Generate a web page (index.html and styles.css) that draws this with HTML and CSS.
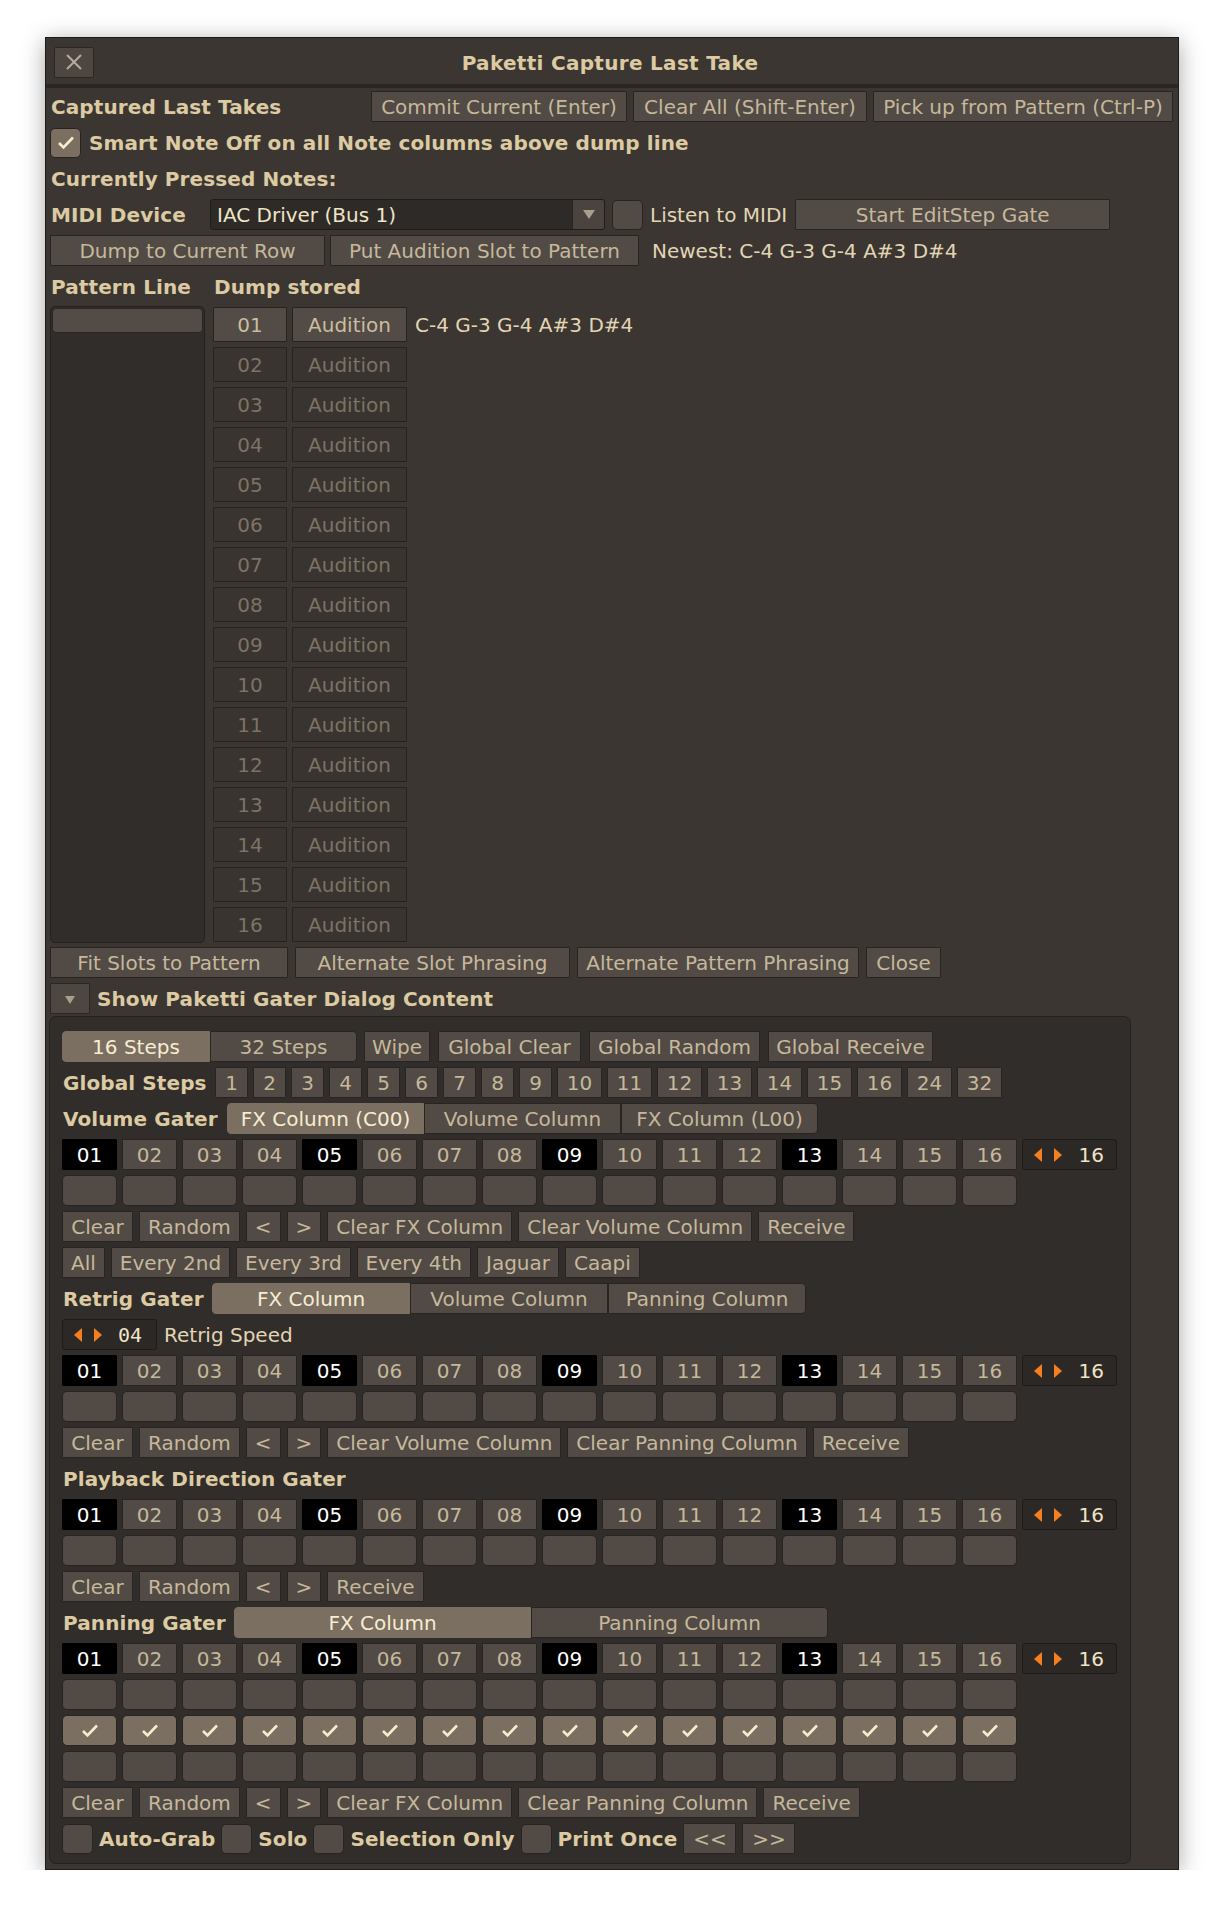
FILE: index.html
```html
<!DOCTYPE html>
<html>
<head>
<meta charset="utf-8">
<title>Paketti Capture Last Take</title>
<link rel="stylesheet" href="styles.css">
</head>
<body>
<div class="win">
  <div class="titlebar">
    <div class="closebtn"><svg width="18" height="18" viewBox="0 0 18 18"><path d="M2 2L16 16M16 2L2 16" stroke="#b6ab97" stroke-width="2" fill="none"/></svg></div>
    <div class="title">Paketti Capture Last Take</div>
    <div></div>
  </div>
  <div class="content">
    <div class="row">
      <span class="lbl">Captured Last Takes</span>
      <span class="btn first-right w-commit">Commit Current (Enter)</span>
      <span class="btn w-clearall">Clear All (Shift-Enter)</span>
      <span class="btn w-pick">Pick up from Pattern (Ctrl-P)</span>
    </div>
    <div class="row g7">
      <span class="cb on"><svg width="18" height="15" viewBox="0 0 18 15"><path d="M2 8L6.5 12.5L16 2.5" fill="none" stroke="#f6edcb" stroke-width="2.6"/></svg></span>
      <span class="lbl">Smart Note Off on all Note columns above dump line</span>
    </div>
    <div class="row"><span class="lbl">Currently Pressed Notes:</span></div>
    <div class="row g7">
      <span class="lbl w-midi">MIDI Device</span>
      <div class="popup"><span class="popup-text">IAC Driver (Bus 1)</span><span class="popup-arrow"><svg width="12" height="9" viewBox="0 0 12 9"><path d="M0 0H12L6 9Z" fill="#a99e8b"/></svg></span></div>
      <span class="cb"></span>
      <span class="txt">Listen to MIDI</span>
      <span class="btn w-gate">Start EditStep Gate</span>
    </div>
    <div class="row g5">
      <span class="btn w-dump">Dump to Current Row</span>
      <span class="btn w-put">Put Audition Slot to Pattern</span>
      <span class="txt newest">Newest: C-4 G-3 G-4 A#3 D#4</span>
    </div>
    <div class="row">
      <span class="lbl w-pline">Pattern Line</span>
      <span class="lbl">Dump stored</span>
    </div>
    <div class="slots-area">
      <div class="plist"><div class="plist-item"></div></div>
      <div class="slots">
        <div class="slot-row"><span class="sbtn num on">01</span><span class="sbtn aud on">Audition</span><span class="txt">C-4 G-3 G-4 A#3 D#4</span></div>
        <div class="slot-row"><span class="sbtn num">02</span><span class="sbtn aud">Audition</span></div>
        <div class="slot-row"><span class="sbtn num">03</span><span class="sbtn aud">Audition</span></div>
        <div class="slot-row"><span class="sbtn num">04</span><span class="sbtn aud">Audition</span></div>
        <div class="slot-row"><span class="sbtn num">05</span><span class="sbtn aud">Audition</span></div>
        <div class="slot-row"><span class="sbtn num">06</span><span class="sbtn aud">Audition</span></div>
        <div class="slot-row"><span class="sbtn num">07</span><span class="sbtn aud">Audition</span></div>
        <div class="slot-row"><span class="sbtn num">08</span><span class="sbtn aud">Audition</span></div>
        <div class="slot-row"><span class="sbtn num">09</span><span class="sbtn aud">Audition</span></div>
        <div class="slot-row"><span class="sbtn num">10</span><span class="sbtn aud">Audition</span></div>
        <div class="slot-row"><span class="sbtn num">11</span><span class="sbtn aud">Audition</span></div>
        <div class="slot-row"><span class="sbtn num">12</span><span class="sbtn aud">Audition</span></div>
        <div class="slot-row"><span class="sbtn num">13</span><span class="sbtn aud">Audition</span></div>
        <div class="slot-row"><span class="sbtn num">14</span><span class="sbtn aud">Audition</span></div>
        <div class="slot-row"><span class="sbtn num">15</span><span class="sbtn aud">Audition</span></div>
        <div class="slot-row"><span class="sbtn num">16</span><span class="sbtn aud">Audition</span></div>
      </div>
    </div>
    <div class="row g7 bottom-row">
      <span class="btn w-fit">Fit Slots to Pattern</span>
      <span class="btn w-alts">Alternate Slot Phrasing</span>
      <span class="btn w-altp">Alternate Pattern Phrasing</span>
      <span class="btn w-close">Close</span>
    </div>
    <div class="row g6">
      <span class="disclosure"><svg width="10" height="8" viewBox="0 0 10 8"><path d="M0 0H10L5 8Z" fill="#a99e8b"/></svg></span>
      <span class="lbl">Show Paketti Gater Dialog Content</span>
    </div>

    <div class="panel">
      <div class="row g8">
        <div class="seg seg-steps"><span class="segb sel w148">16 Steps</span><span class="segb w147">32 Steps</span></div>
        <span class="btn w-wipe">Wipe</span>
        <span class="btn w-gclear">Global Clear</span>
        <span class="btn w-grandom">Global Random</span>
        <span class="btn w-greceive">Global Receive</span>
      </div>
      <div class="row g5">
        <span class="lbl w-gs">Global Steps</span>
        <span class="btn gs1">1</span><span class="btn gs1">2</span><span class="btn gs1">3</span><span class="btn gs1">4</span><span class="btn gs1">5</span><span class="btn gs1">6</span><span class="btn gs1">7</span><span class="btn gs1">8</span><span class="btn gs1">9</span>
        <span class="btn gs2">10</span><span class="btn gs2">11</span><span class="btn gs2">12</span><span class="btn gs2">13</span><span class="btn gs2">14</span><span class="btn gs2">15</span><span class="btn gs2">16</span><span class="btn gs2">24</span><span class="btn gs2">32</span>
      </div>
      <div class="row">
        <span class="lbl w-vg">Volume Gater</span>
        <div class="seg"><span class="segb sel w197">FX Column (C00)</span><span class="segb w197">Volume Column</span><span class="segb w197">FX Column (L00)</span></div>
      </div>
      <div class="row g5">
        <span class="step hl">01</span><span class="step">02</span><span class="step">03</span><span class="step">04</span><span class="step hl">05</span><span class="step">06</span><span class="step">07</span><span class="step">08</span><span class="step hl">09</span><span class="step">10</span><span class="step">11</span><span class="step">12</span><span class="step hl">13</span><span class="step">14</span><span class="step">15</span><span class="step">16</span>
        <span class="vbox"><svg class="arr" width="8" height="14" viewBox="0 0 8 14"><path d="M8 0L0 7L8 14Z"/></svg><svg class="arr" width="8" height="14" viewBox="0 0 8 14"><path d="M0 0L8 7L0 14Z"/></svg><span class="vnum">16</span></span>
      </div>
      <div class="row g5">
        <span class="cell"></span><span class="cell"></span><span class="cell"></span><span class="cell"></span><span class="cell"></span><span class="cell"></span><span class="cell"></span><span class="cell"></span><span class="cell"></span><span class="cell"></span><span class="cell"></span><span class="cell"></span><span class="cell"></span><span class="cell"></span><span class="cell"></span><span class="cell"></span>
      </div>
      <div class="row">
        <span class="btn w-clr">Clear</span><span class="btn">Random</span><span class="btn">&lt;</span><span class="btn">&gt;</span><span class="btn">Clear FX Column</span><span class="btn">Clear Volume Column</span><span class="btn">Receive</span>
      </div>
      <div class="row">
        <span class="btn">All</span><span class="btn">Every 2nd</span><span class="btn">Every 3rd</span><span class="btn">Every 4th</span><span class="btn">Jaguar</span><span class="btn">Caapi</span>
      </div>
      <div class="row">
        <span class="lbl w-rg">Retrig Gater</span>
        <div class="seg"><span class="segb sel w198">FX Column</span><span class="segb w198">Volume Column</span><span class="segb w198">Panning Column</span></div>
      </div>
      <div class="row g7">
        <span class="vbox"><svg class="arr" width="8" height="14" viewBox="0 0 8 14"><path d="M8 0L0 7L8 14Z"/></svg><svg class="arr" width="8" height="14" viewBox="0 0 8 14"><path d="M0 0L8 7L0 14Z"/></svg><span class="vnum mono">04</span></span>
        <span class="txt">Retrig Speed</span>
      </div>
      <div class="row g5">
        <span class="step hl">01</span><span class="step">02</span><span class="step">03</span><span class="step">04</span><span class="step hl">05</span><span class="step">06</span><span class="step">07</span><span class="step">08</span><span class="step hl">09</span><span class="step">10</span><span class="step">11</span><span class="step">12</span><span class="step hl">13</span><span class="step">14</span><span class="step">15</span><span class="step">16</span>
        <span class="vbox"><svg class="arr" width="8" height="14" viewBox="0 0 8 14"><path d="M8 0L0 7L8 14Z"/></svg><svg class="arr" width="8" height="14" viewBox="0 0 8 14"><path d="M0 0L8 7L0 14Z"/></svg><span class="vnum">16</span></span>
      </div>
      <div class="row g5">
        <span class="cell"></span><span class="cell"></span><span class="cell"></span><span class="cell"></span><span class="cell"></span><span class="cell"></span><span class="cell"></span><span class="cell"></span><span class="cell"></span><span class="cell"></span><span class="cell"></span><span class="cell"></span><span class="cell"></span><span class="cell"></span><span class="cell"></span><span class="cell"></span>
      </div>
      <div class="row">
        <span class="btn w-clr">Clear</span><span class="btn">Random</span><span class="btn">&lt;</span><span class="btn">&gt;</span><span class="btn">Clear Volume Column</span><span class="btn">Clear Panning Column</span><span class="btn">Receive</span>
      </div>
      <div class="row">
        <span class="lbl">Playback Direction Gater</span>
      </div>
      <div class="row g5">
        <span class="step hl">01</span><span class="step">02</span><span class="step">03</span><span class="step">04</span><span class="step hl">05</span><span class="step">06</span><span class="step">07</span><span class="step">08</span><span class="step hl">09</span><span class="step">10</span><span class="step">11</span><span class="step">12</span><span class="step hl">13</span><span class="step">14</span><span class="step">15</span><span class="step">16</span>
        <span class="vbox"><svg class="arr" width="8" height="14" viewBox="0 0 8 14"><path d="M8 0L0 7L8 14Z"/></svg><svg class="arr" width="8" height="14" viewBox="0 0 8 14"><path d="M0 0L8 7L0 14Z"/></svg><span class="vnum">16</span></span>
      </div>
      <div class="row g5">
        <span class="cell"></span><span class="cell"></span><span class="cell"></span><span class="cell"></span><span class="cell"></span><span class="cell"></span><span class="cell"></span><span class="cell"></span><span class="cell"></span><span class="cell"></span><span class="cell"></span><span class="cell"></span><span class="cell"></span><span class="cell"></span><span class="cell"></span><span class="cell"></span>
      </div>
      <div class="row">
        <span class="btn w-clr">Clear</span><span class="btn">Random</span><span class="btn">&lt;</span><span class="btn">&gt;</span><span class="btn">Receive</span>
      </div>
      <div class="row">
        <span class="lbl w-pg">Panning Gater</span>
        <div class="seg"><span class="segb sel w297">FX Column</span><span class="segb w297">Panning Column</span></div>
      </div>
      <div class="row g5">
        <span class="step hl">01</span><span class="step">02</span><span class="step">03</span><span class="step">04</span><span class="step hl">05</span><span class="step">06</span><span class="step">07</span><span class="step">08</span><span class="step hl">09</span><span class="step">10</span><span class="step">11</span><span class="step">12</span><span class="step hl">13</span><span class="step">14</span><span class="step">15</span><span class="step">16</span>
        <span class="vbox"><svg class="arr" width="8" height="14" viewBox="0 0 8 14"><path d="M8 0L0 7L8 14Z"/></svg><svg class="arr" width="8" height="14" viewBox="0 0 8 14"><path d="M0 0L8 7L0 14Z"/></svg><span class="vnum">16</span></span>
      </div>
      <div class="row g5">
        <span class="cell"></span><span class="cell"></span><span class="cell"></span><span class="cell"></span><span class="cell"></span><span class="cell"></span><span class="cell"></span><span class="cell"></span><span class="cell"></span><span class="cell"></span><span class="cell"></span><span class="cell"></span><span class="cell"></span><span class="cell"></span><span class="cell"></span><span class="cell"></span>
      </div>
      <div class="row g5">
        <span class="cell on"><svg width="18" height="15" viewBox="0 0 18 15"><path d="M2 8L6.5 12.5L16 2.5" fill="none" stroke="#f6edcb" stroke-width="2.6"/></svg></span>
        <span class="cell on"><svg width="18" height="15" viewBox="0 0 18 15"><path d="M2 8L6.5 12.5L16 2.5" fill="none" stroke="#f6edcb" stroke-width="2.6"/></svg></span>
        <span class="cell on"><svg width="18" height="15" viewBox="0 0 18 15"><path d="M2 8L6.5 12.5L16 2.5" fill="none" stroke="#f6edcb" stroke-width="2.6"/></svg></span>
        <span class="cell on"><svg width="18" height="15" viewBox="0 0 18 15"><path d="M2 8L6.5 12.5L16 2.5" fill="none" stroke="#f6edcb" stroke-width="2.6"/></svg></span>
        <span class="cell on"><svg width="18" height="15" viewBox="0 0 18 15"><path d="M2 8L6.5 12.5L16 2.5" fill="none" stroke="#f6edcb" stroke-width="2.6"/></svg></span>
        <span class="cell on"><svg width="18" height="15" viewBox="0 0 18 15"><path d="M2 8L6.5 12.5L16 2.5" fill="none" stroke="#f6edcb" stroke-width="2.6"/></svg></span>
        <span class="cell on"><svg width="18" height="15" viewBox="0 0 18 15"><path d="M2 8L6.5 12.5L16 2.5" fill="none" stroke="#f6edcb" stroke-width="2.6"/></svg></span>
        <span class="cell on"><svg width="18" height="15" viewBox="0 0 18 15"><path d="M2 8L6.5 12.5L16 2.5" fill="none" stroke="#f6edcb" stroke-width="2.6"/></svg></span>
        <span class="cell on"><svg width="18" height="15" viewBox="0 0 18 15"><path d="M2 8L6.5 12.5L16 2.5" fill="none" stroke="#f6edcb" stroke-width="2.6"/></svg></span>
        <span class="cell on"><svg width="18" height="15" viewBox="0 0 18 15"><path d="M2 8L6.5 12.5L16 2.5" fill="none" stroke="#f6edcb" stroke-width="2.6"/></svg></span>
        <span class="cell on"><svg width="18" height="15" viewBox="0 0 18 15"><path d="M2 8L6.5 12.5L16 2.5" fill="none" stroke="#f6edcb" stroke-width="2.6"/></svg></span>
        <span class="cell on"><svg width="18" height="15" viewBox="0 0 18 15"><path d="M2 8L6.5 12.5L16 2.5" fill="none" stroke="#f6edcb" stroke-width="2.6"/></svg></span>
        <span class="cell on"><svg width="18" height="15" viewBox="0 0 18 15"><path d="M2 8L6.5 12.5L16 2.5" fill="none" stroke="#f6edcb" stroke-width="2.6"/></svg></span>
        <span class="cell on"><svg width="18" height="15" viewBox="0 0 18 15"><path d="M2 8L6.5 12.5L16 2.5" fill="none" stroke="#f6edcb" stroke-width="2.6"/></svg></span>
        <span class="cell on"><svg width="18" height="15" viewBox="0 0 18 15"><path d="M2 8L6.5 12.5L16 2.5" fill="none" stroke="#f6edcb" stroke-width="2.6"/></svg></span>
        <span class="cell on"><svg width="18" height="15" viewBox="0 0 18 15"><path d="M2 8L6.5 12.5L16 2.5" fill="none" stroke="#f6edcb" stroke-width="2.6"/></svg></span>
      </div>
      <div class="row g5">
        <span class="cell"></span><span class="cell"></span><span class="cell"></span><span class="cell"></span><span class="cell"></span><span class="cell"></span><span class="cell"></span><span class="cell"></span><span class="cell"></span><span class="cell"></span><span class="cell"></span><span class="cell"></span><span class="cell"></span><span class="cell"></span><span class="cell"></span><span class="cell"></span>
      </div>
      <div class="row">
        <span class="btn w-clr">Clear</span><span class="btn">Random</span><span class="btn">&lt;</span><span class="btn">&gt;</span><span class="btn">Clear FX Column</span><span class="btn">Clear Panning Column</span><span class="btn">Receive</span>
      </div>
      <div class="row g6 last-row">
        <span class="cb"></span><span class="lbl">Auto-Grab</span>
        <span class="cb"></span><span class="lbl">Solo</span>
        <span class="cb"></span><span class="lbl">Selection Only</span>
        <span class="cb"></span><span class="lbl">Print Once</span>
        <span class="btn w-nav">&lt;&lt;</span><span class="btn w-nav">&gt;&gt;</span>
      </div>
    </div>
  </div>
</div>
</body>
</html>
```
FILE: styles.css
```css
* { box-sizing: border-box; }

body {
  margin: 0;
  background: #ffffff;
  font-family: "DejaVu Sans", "Liberation Sans", sans-serif;
  font-size: 20px;
  color: #dccaa2;
}

.win {
  margin: 37px 0 0 45px;
  width: 1134px;
  height: 1833px;
  background: #3b3632;
  border: 1px solid #1d1a18;
  box-shadow: 0 4px 22px rgba(0, 0, 0, 0.35);
}

.titlebar {
  height: 50px;
  display: grid;
  grid-template-columns: 56px 1fr 68px;
  align-items: center;
  padding-left: 8px;
  border-bottom: 4px solid #2a2623;
}

.closebtn {
  width: 40px;
  height: 31px;
  margin-top: 2px;
  background: #4d4641;
  border: 1px solid #2a2623;
  border-radius: 2px;
  display: flex;
  align-items: center;
  justify-content: center;
}

.title {
  text-align: center;
  font-weight: bold;
  color: #dccaa2;
  letter-spacing: 0.3px;
  padding-top: 3px;
}

.content {
  padding: 3px 5px 0 4px;
}

.row {
  display: flex;
  align-items: center;
  height: 31px;
  gap: 6px;
  margin-bottom: 5px;
  white-space: nowrap;
}

.g5 { gap: 5px; }
.g6 { gap: 6px; }
.g7 { gap: 7px; }
.g8 { gap: 8px; }

.lbl {
  font-weight: bold;
  color: #dccaa2;
  padding-left: 1px;
  letter-spacing: 0.1px;
}

.txt {
  color: #e2d5b3;
}

.btn {
  height: 31px;
  display: inline-flex;
  align-items: center;
  justify-content: center;
  padding: 0 8px;
  background: #514a45;
  border: 1px solid #28241f;
  border-radius: 1px;
  color: #c6b89b;
  flex: none;
}

.first-right { margin-left: auto; }
.w-commit { width: 256px; }
.w-clearall { width: 234px; }
.w-pick { width: 300px; }

.cb {
  width: 31px;
  height: 30px;
  background: #514a45;
  border: 1px solid #28241f;
  border-radius: 5px;
  display: inline-flex;
  align-items: center;
  justify-content: center;
  flex: none;
}
.cb.on { background: #7b6f62; }

.w-midi { width: 153px; }
.popup {
  width: 395px;
  height: 31px;
  display: flex;
  background: #2e2a27;
  border: 1px solid #1f1c1a;
  border-radius: 3px;
  overflow: hidden;
}
.popup-text {
  flex: 1;
  display: flex;
  align-items: center;
  padding-left: 6px;
  color: #efe4c6;
}
.popup-arrow {
  width: 32px;
  display: flex;
  align-items: center;
  justify-content: center;
  background: #4a433e;
  border-left: 1px solid #2a2623;
}
.w-gate { width: 315px; margin-left: 1px; }
.w-dump { width: 275px; }
.w-put { width: 309px; }
.newest { margin-left: 8px; }
.w-pline { width: 157px; }

.slots-area {
  display: flex;
  gap: 8px;
  margin-top: -1px;
}
.plist {
  width: 155px;
  height: 637px;
  background: #312d2a;
  border: 1px solid #24211f;
  border-radius: 5px;
  padding: 1px;
}
.plist-item {
  height: 25px;
  background: #524b46;
  border-radius: 4px;
  border: 1px solid #2a2623;
}
.slots {
  display: flex;
  flex-direction: column;
  gap: 5px;
  padding-top: 1px;
}
.slot-row {
  display: flex;
  align-items: center;
  height: 35px;
  gap: 5px;
}
.sbtn {
  height: 35px;
  display: inline-flex;
  align-items: center;
  justify-content: center;
  background: #39342f;
  border: 1px solid #25221f;
  border-radius: 1px;
  color: #7c7265;
}
.sbtn.on {
  background: #524b46;
  color: #cbbd9f;
}
.num { width: 74px; }
.aud { width: 115px; margin-right: 3px; }

.bottom-row { margin-top: 4px; }
.w-fit { width: 238px; }
.w-alts { width: 275px; }
.w-altp { width: 282px; }
.w-close { width: 75px; }

.disclosure {
  width: 40px;
  height: 31px;
  background: #4d4641;
  border: 1px solid #2a2623;
  border-radius: 1px;
  display: inline-flex;
  align-items: center;
  justify-content: center;
  padding-top: 2px;
}

.panel {
  margin: -3px 0 0 -1px;
  width: 1082px;
  height: 848px;
  background: #312d2a;
  border: 1px solid #24211f;
  border-radius: 7px;
  padding: 14px 0 0 12px;
}

.seg {
  display: flex;
  height: 31px;
}
.seg-steps { margin-right: -1px; }
.segb {
  height: 31px;
  display: inline-flex;
  align-items: center;
  justify-content: center;
  background: #514a45;
  border: 1px solid #28241f;
  color: #c6b89b;
}
.segb:first-child { border-radius: 4px 0 0 4px; }
.segb:last-child { border-radius: 0 4px 4px 0; }
.segb.sel {
  background: #7b6f62;
  color: #f7edd0;
  border-color: #7b6f62;
}
.w147 { width: 147px; }
.w148 { width: 148px; }
.w197 { width: 197px; }
.w198 { width: 198px; }
.w297 { width: 297px; }

.w-wipe { width: 66px; }
.w-gclear { width: 143px; }
.w-grandom { width: 171px; }
.w-greceive { width: 165px; }
.w-clr { width: 71px; }

.w-gs { width: 148px; }
.gs1 { width: 33px; padding: 0; }
.gs2 { width: 45px; padding: 0; }
.w-vg { width: 159px; }
.w-rg { width: 144px; }
.w-pg { width: 166px; }

.step {
  width: 55px;
  height: 31px;
  display: inline-flex;
  align-items: center;
  justify-content: center;
  background: #514a45;
  border: 1px solid #28241f;
  border-radius: 1px;
  color: #c6b89b;
  flex: none;
}
.step.hl {
  background: #000;
  border-color: #000;
  color: #ffffff;
}

.cell {
  width: 55px;
  height: 31px;
  background: #514a45;
  border: 1px solid #28241f;
  border-radius: 5px;
  display: inline-flex;
  align-items: center;
  justify-content: center;
  flex: none;
}
.cell.on { background: #7b6f62; }

.vbox {
  width: 95px;
  height: 31px;
  display: inline-flex;
  align-items: center;
  background: #2c2825;
  border: 1px solid #1d1a18;
  border-radius: 3px;
  padding-left: 11px;
  gap: 12px;
  flex: none;
}
.arr { fill: #f47f1f; flex: none; }
.vnum {
  margin-left: auto;
  padding-right: 12px;
  color: #efe4c6;
}
.vnum.mono {
  font-family: "DejaVu Sans Mono", "Liberation Mono", monospace;
  padding-right: 14px;
}

.last-row .lbl { padding-left: 0; }
.w-nav { width: 53px; padding: 0; }
```
